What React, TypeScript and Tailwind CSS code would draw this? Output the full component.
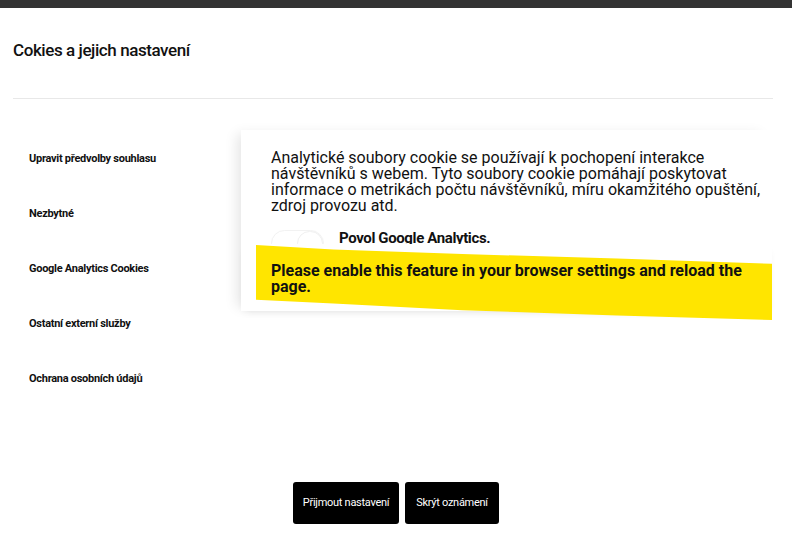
import React from "react";

const menu = [
  "Upravit předvolby souhlasu",
  "Nezbytné",
  "Google Analytics Cookies",
  "Ostatní externí služby",
  "Ochrana osobních údajů",
];

export default function App() {
  return (
    <div className="w-[792px] h-[548px] bg-white text-[#111] overflow-hidden font-['Roboto','Liberation_Sans',sans-serif]">
      <div className="h-2 bg-[#333]" />

      {/* header */}
      <div className="ml-[13px] mr-[19px] h-[91px] border-b border-[#e8e8e8] pt-[31px]">
        <h1 className="text-[17px] leading-[22px] font-medium tracking-tight">Cokies a jejich nastavení</h1>
      </div>

      {/* body */}
      <div className="flex ml-[13px] mr-[20px]">
        <ul className="w-[228px] shrink-0 pt-[33px]">
          {menu.map((m) => (
            <li key={m} className="h-[55px] flex items-center pl-4 text-[11px] font-bold tracking-tight">
              {m}
            </li>
          ))}
        </ul>

        <div className="relative flex-1 mt-[31px] h-[181px] bg-white shadow-[-8px_0_12px_-4px_rgba(0,0,0,0.1)]">
          <div className="pl-[30px] pr-2 pt-5">
            <p className="text-[16px] leading-4 whitespace-nowrap">
              Analytické soubory cookie se používají k pochopení interakce
              <br />
              návštěvníků s webem. Tyto soubory cookie pomáhají poskytovat
              <br />
              informace o metrikách počtu návštěvníků, míru okamžitého opuštění,
              <br />
              zdroj provozu atd.
            </p>
            <div className="mt-4 flex items-start gap-[15px]">
              <div className="relative w-[53px] h-[27px] rounded-full border border-[#f2f2f2] bg-white">
                <div className="absolute right-0 top-0 w-[26px] h-[25px] rounded-full border border-[#f0f0f0] bg-white" />
              </div>
              <span className="text-[15px] leading-4 font-bold tracking-tight">Povol Google Analytics.</span>
            </div>
          </div>

          {/* notice overlay */}
          <div className="absolute left-0 right-0 top-[114px] h-[67px] bg-white shadow-[0_4px_8px_-4px_rgba(0,0,0,0.1)]">
            <div className="absolute left-[15px] top-[1px] w-[516px] h-[75px] bg-[#ffe500] [clip-path:polygon(0_0,15%_6%,40%_12%,70%_18%,100%_25%,100%_100%,70%_94%,40%_87%,15%_78%,0_73%)]" />
            <p className="relative pl-[30px] pt-[19px] text-[16px] leading-4 font-bold whitespace-nowrap">
              Please enable this feature in your browser settings and reload the
              <br />
              page.
            </p>
          </div>
        </div>
      </div>

      {/* footer */}
      <div className="flex justify-center gap-[6px] mt-[75px]">
        <button className="w-[106px] h-[42px] rounded-[3px] bg-black text-white text-[11px] tracking-tight">Přijmout nastavení</button>
        <button className="w-[94px] h-[42px] rounded-[3px] bg-black text-white text-[11px] tracking-tight">Skrýt oznámení</button>
      </div>
    </div>
  );
}
